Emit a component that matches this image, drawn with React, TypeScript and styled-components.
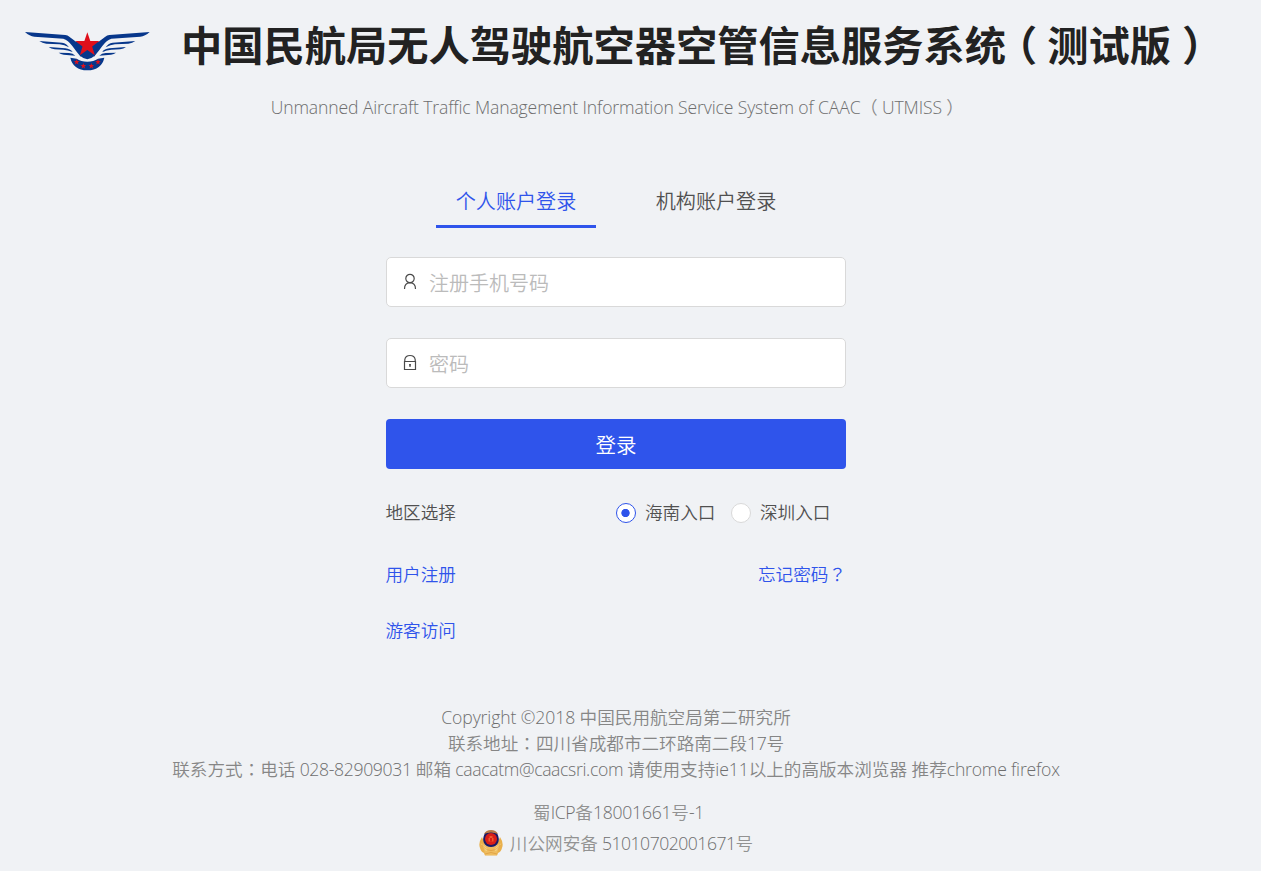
import React from "react";
import styled, { createGlobalStyle } from "styled-components";

const Global = createGlobalStyle`
  * { box-sizing: border-box; }
  body { margin: 0; background: #f0f2f5; overflow: hidden; }
  input, button { font: inherit; }
`;

const Page = styled.div`
  width: 1232px;
  height: 871px;
  display: flex;
  flex-direction: column;
  align-items: center;
  font-family: "Open Sans", "Noto Sans CJK SC", sans-serif;
  font-weight: 350;
  font-size: 17.6px;
  color: #505050;
  white-space: nowrap;
`;

const Header = styled.header`
  width: 100%;
  height: 93px;
  display: flex;
  align-items: flex-start;
  padding-left: 15px;
`;

const Logo = styled.svg`
  width: 145px;
  height: 60px;
  margin: 20px 21px 0 0;
  flex: none;
`;

const Title = styled.h1`
  margin: 13px 0 0;
  font: 700 41.25px/60px "Noto Sans CJK SC", sans-serif;
  color: #222;
`;

const Bracket = styled.span<{ $before: number; $after: number }>`
  font-family: "Noto Sans CJK SC", sans-serif;
  font-feature-settings: "halt";
  margin-left: ${(p) => p.$before}em;
  margin-right: ${(p) => p.$after}em;
`;

const Centered = styled.span`
  font-family: "Noto Sans CJK TC", sans-serif;
`;

const Latin = styled.span<{ $spacing?: number }>`
  color: #6e6e6e;
  letter-spacing: ${(p) => p.$spacing ?? -0.35}px;
`;

const Subtitle = styled.p`
  margin: 0;
  line-height: 28px;
  color: #888;
`;

const Tabs = styled.nav`
  display: flex;
  width: 360px;
  gap: 40px;
  margin-top: 53px;
`;

const Tab = styled.a<{ $active?: boolean }>`
  width: 160px;
  height: 54px;
  text-align: center;
  font-size: 20.1px;
  line-height: 56px;
  color: ${(p) => (p.$active ? "#2f54eb" : "#505050")};
  box-shadow: ${(p) => (p.$active ? "inset 0 -3px #2f54eb" : "none")};
`;

const Form = styled.form`
  width: 460px;
  display: flex;
  flex-direction: column;
  padding-top: 29px;
`;

const Field = styled.label`
  height: 50px;
  display: flex;
  align-items: center;
  margin-bottom: 31px;
  padding-left: 16px;
  gap: 12px;
  background: #fff;
  border: 1px solid #d9d9d9;
  border-radius: 5px;
`;

const FieldIcon = styled.svg`
  width: 14px;
  height: 18px;
  fill: none;
  stroke: #4a4a4a;
  stroke-width: 1.2;
`;

const Input = styled.input`
  flex: 1;
  min-width: 0;
  padding: 2px 0 0;
  border: 0;
  outline: 0;
  background: none;
  font-size: 20px;
  &::placeholder { color: #bbb; opacity: 1; }
`;

const Submit = styled.button`
  height: 50px;
  padding: 0;
  border: 0;
  border-radius: 4px;
  background: #2f54eb;
  color: #fff;
  font-size: 20.5px;
`;

const Row = styled.div<{ $top: number }>`
  display: flex;
  align-items: center;
  height: 26px;
  line-height: 24px;
  margin-top: ${(p) => p.$top}px;
`;

const Caption = styled.span`
  padding-bottom: 3px;
`;

const RegionLabel = styled(Caption)`
  width: 230.5px;
  margin-left: -0.5px;
`;

const Option = styled.label`
  display: flex;
  align-items: center;
  gap: 9px;
  width: 115px;
`;

const Radio = styled.span<{ $checked?: boolean }>`
  width: 20px;
  height: 20px;
  border-radius: 50%;
  border: 1px solid ${(p) => (p.$checked ? "#2f54eb" : "#d9d9d9")};
  background: ${(p) => (p.$checked ? "radial-gradient(circle at 8.5px 9px, #2f54eb 3.8px, #fff 4.5px)" : "#fff")};
`;

const Link = styled.a<{ $end?: boolean }>`
  color: #2f54eb;
  padding-bottom: 3px;
  margin-left: ${(p) => (p.$end ? "auto" : "-0.5px")};
`;

const Footer = styled.footer`
  display: flex;
  flex-direction: column;
  align-items: center;
  margin-top: 60px;
  color: #868686;
`;

const Line = styled.div`
  line-height: 26px;
`;

const Record = styled.div<{ $top: number; $left?: number }>`
  display: flex;
  align-items: center;
  gap: 7px;
  height: 26px;
  line-height: 26px;
  margin-top: ${(p) => p.$top}px;
  margin-left: ${(p) => p.$left ?? 0}px;
  color: #929292;
`;

const RecordText = styled.span`
  padding-bottom: 1px;
`;

const Badge = styled.svg`
  width: 24px;
  height: 26px;
`;

const starPoints = (cx: number, cy: number, r: number) =>
  Array.from({ length: 10 }, (_, i) => {
    const radius = i % 2 ? r * 0.4 : r;
    const a = (Math.PI * i) / 5 - Math.PI / 2;
    return `${cx + radius * Math.cos(a)},${cy + radius * Math.sin(a)}`;
  }).join(" ");

const Wing = () => (
  <g fill="#07378b">
    <path d="M30 36 L151 45 Q158 46 163 50 L205 82 L197 110 Q184 95 172 78 Q159 60 145 56 L58 50 Q44 49 30 36Z" />
    <path d="M73 63 L141 68 Q155 70 162 82 Q148 74 134 73 L94 71 Q82 70 73 63Z" />
    <path d="M101 81 L151 85 Q166 87 173 96 Q158 90 145 89 L119 88 Q108 87 101 81Z" />
    <path d="M131 98 L162 99 Q174 100 181 107 L146 104 Q137 103 131 98Z" />
  </g>
);

const AviationLogo = () => (
  <Logo viewBox="0 0 435 180">
    <Wing />
    <g transform="translate(434 0) scale(-1 1)">
      <Wing />
    </g>
    <path fill="#07378b" d="M182 65 H252 L238 108 Q217 127 196 108Z" />
    <path fill="#07378b" d="M166 113 L185 116 Q198 125 217 125 Q236 125 249 116 L268 113 Q260 150 217 151 Q174 150 166 113Z" />
    <polygon fill="#df101b" points={starPoints(217, 75, 38)} />
    {[[185, 126], [205, 138], [229, 138], [249, 126]].map(([x, y]) => (
      <polygon key={x} fill="#df101b" points={starPoints(x, y, 9)} />
    ))}
  </Logo>
);

const PoliceBadge = () => (
  <Badge viewBox="0 0 24 26">
    <path fill="#e9b04c" d="M3 7 Q-1 13 1 18 Q2 22 5 23 L6 25.5 H18 L19 23 Q22 22 23 18 Q25 13 21 7 L17 17 H7Z" />
    <path fill="#efbd60" d="M4 14 Q12 20 20 14 L18 25 H6Z" />
    <path fill="#f7d98c" d="M1.5 13 L9 19.5 L7 21Z M22.5 13 L15 19.5 L17 21Z" />
    <path fill="#1b1b62" d="M12 1 Q15 3 18 3 Q21 9 19 13 Q17 17 12 17 Q7 17 5 13 Q3 9 6 3 Q9 3 12 1Z" />
    <path fill="#b87a45" d="M5 4 Q7 0 12 0 Q17 0 19 4 Q16 2.5 12 2.5 Q8 2.5 5 4Z" />
    <circle cx="12" cy="9" r="6" fill="#d91f18" />
    <path fill="#f05a2d" d="M9.5 11.5 V8 H10.5 V6 H13.5 V8 H14.5 V11.5Z" />
    <path fill="#d91f18" d="M11 8 H13 V11.5 H11Z" />
    <path fill="none" stroke="#d99335" strokeWidth="0.6" d="M3 15 Q6 20 12 20.5 Q18 20 21 15 M6 24 Q12 21 18 24" />
  </Badge>
);

export default function App() {
  return (
    <Page>
      <Global />
      <Header>
        <AviationLogo />
        <Title>
          中国民航局无人驾驶航空器空管信息服务系统
          <Bracket $before={0.26} $after={0.24}>（</Bracket>测试版<Bracket $before={0.27} $after={0.23}>）</Bracket>
        </Title>
      </Header>
      <Subtitle>
        <Latin $spacing={-0.14}>Unmanned Aircraft Traffic Management Information Service System of CAAC</Latin>
        <Bracket $before={0.47} $after={0.25}>（</Bracket>
        <Latin $spacing={-0.1}>UTMISS</Latin>
        <Bracket $before={0.25} $after={0.35}>）</Bracket>
      </Subtitle>
      <Tabs>
        <Tab $active>个人账户登录</Tab>
        <Tab>机构账户登录</Tab>
      </Tabs>
      <Form>
        <Field>
          <FieldIcon viewBox="0 0 14 18">
            <circle cx="7" cy="5.5" r="4.2" />
            <path d="M1.5 16 Q1.5 10 7 9.7 Q12.5 10 12.5 16" />
          </FieldIcon>
          <Input placeholder="注册手机号码" />
        </Field>
        <Field>
          <FieldIcon viewBox="0 0 14 18">
            <path d="M1.5 7.5 H12.5 V15.5 H1.5Z M1.8 7.5 V5.5 Q2.5 1.5 7 1.5 Q11.5 1.5 12.2 5.5 V7.5 M7 10 V13 M6 10.8 H8" />
          </FieldIcon>
          <Input placeholder="密码" />
        </Field>
        <Submit type="button">登录</Submit>
        <Row $top={31}>
          <RegionLabel>地区选择</RegionLabel>
          <Option><Radio $checked /><Caption>海南入口</Caption></Option>
          <Option><Radio /><Caption>深圳入口</Caption></Option>
        </Row>
        <Row $top={36}>
          <Link>用户注册</Link>
          <Link $end>忘记密码<Centered>？</Centered></Link>
        </Row>
        <Row $top={30}>
          <Link>游客访问</Link>
        </Row>
      </Form>
      <Footer>
        <Line><Latin $spacing={-0.1}>Copyright ©2018 </Latin>中国民用航空局第二研究所</Line>
        <Line>联系地址<Centered>：</Centered>四川省成都市二环路南二段<Latin>17</Latin>号</Line>
        <Line>
          联系方式<Centered>：</Centered>电话<Latin> 028-82909031 </Latin>邮箱<Latin> caacatm@caacsri.com </Latin>请使用支持<Latin $spacing={-0.1}>ie11</Latin>以上的高版本浏览器 推荐<Latin $spacing={-0.2}>chrome firefox</Latin>
        </Line>
        <Record $top={17} $left={5}><RecordText>蜀<Latin>ICP</Latin>备<Latin $spacing={-0.25}>18001661</Latin>号<Latin>-1</Latin></RecordText></Record>
        <Record $top={5}>
          <PoliceBadge />
          <RecordText>川公网安备<Latin $spacing={-0.5}> 51010702001671</Latin>号</RecordText>
        </Record>
      </Footer>
    </Page>
  );
}
